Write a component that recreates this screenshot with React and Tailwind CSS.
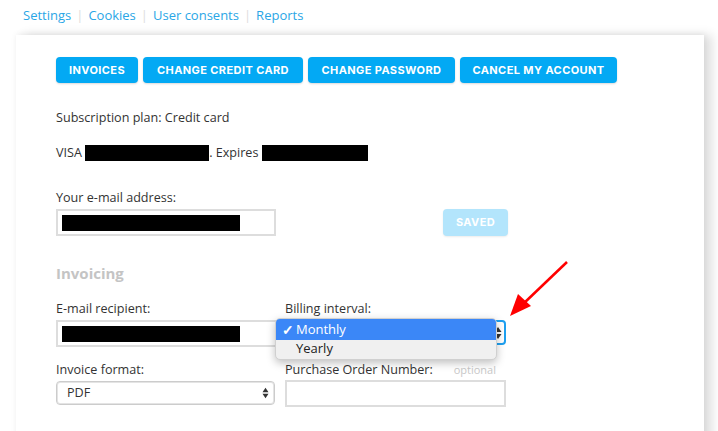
import React from "react";

const Redact = ({ w, h = 16 }) => (
  <span className="inline-block bg-black align-middle" style={{ width: w, height: h }} />
);

export default function App() {
  const font = { fontFamily: '"Open Sans", "Noto Sans", sans-serif' };
  const btnFont = { fontFamily: 'Inter, "DejaVu Sans", sans-serif' };
  const buttons = [
    ["INVOICES", "w-[82px]"],
    ["CHANGE CREDIT CARD", "w-[160px]"],
    ["CHANGE PASSWORD", "w-[147px]"],
    ["CANCEL MY ACCOUNT", "w-[157px]"],
  ];
  return (
    <div className="relative w-[718px] h-[431px] overflow-hidden bg-white text-[#333]" style={font}>
      <nav className="flex items-center h-[33px] pl-[23px] pb-[1px] text-[13px] text-[#2aa6e6]">
        <span>Settings</span>
        <span className="mx-[5px] text-[#ddd]">|</span>
        <span>Cookies</span>
        <span className="mx-[5px] text-[#ddd]">|</span>
        <span>User consents</span>
        <span className="mx-[5px] text-[#ddd]">|</span>
        <span>Reports</span>
      </nav>
      <div className="ml-[16px] mt-[2px] w-[688px] h-[420px] bg-white shadow-[8px_0_10px_rgba(0,0,0,0.13),0_-1px_6px_rgba(0,0,0,0.06)] pl-[40px] pt-[22px]">
        <div className="flex gap-[5px]" style={btnFont}>
          {buttons.map(([t, w]) => (
            <div
              key={t}
              className={`${w} h-[26px] rounded-[4px] bg-[#03a9f4] text-white text-[11px] font-bold tracking-[0.4px] flex items-center justify-center shadow-[0_1px_2px_rgba(0,0,0,0.15)]`}
            >
              {t}
            </div>
          ))}
        </div>
        <div className="mt-[26px] text-[12.6px] leading-[18px]">Subscription plan: Credit card</div>
        <div className="mt-[17px] text-[12.6px] leading-[18px] flex items-center">
          <span>VISA&nbsp;</span>
          <Redact w={124} />
          <span>. Expires&nbsp;</span>
          <Redact w={106} />
        </div>
        <div className="mt-[27px] text-[12.6px] leading-[18px]">Your e-mail address:</div>
        <div className="mt-[2px] w-[450px] flex justify-between items-start">
          <div className="w-[220px] h-[27px] border-2 border-[#ddd] flex items-center pl-[4px]">
            <Redact w={178} />
          </div>
          <div
            className="w-[65px] h-[27px] rounded-[4px] bg-[#b3e5fc] text-white text-[11px] font-bold tracking-[0.4px] flex items-center justify-center mr-[-2px] shadow-[0_1px_2px_rgba(0,0,0,0.08)]"
            style={btnFont}
          >
            SAVED
          </div>
        </div>
        <div className="mt-[27px] text-[15px] leading-[20px] font-bold text-[#c4c4c4]">Invoicing</div>
        <div className="mt-[17px] grid grid-cols-[229px_221px] text-[12.6px]">
          <div className="leading-[18px]">E-mail recipient:</div>
          <div className="leading-[18px]">Billing interval:</div>
          <div className="mt-[2px] w-[224px] h-[27px] border-2 border-[#ddd] flex items-center pl-[4px]">
            <Redact w={178} />
          </div>
          <div className="relative mt-[2px]">
            <div className="w-[221px] h-[25px] rounded-[4px] border-2 border-[#1ea0f0] bg-white flex items-center justify-end pr-[2px]">
              <svg width="8" height="14" viewBox="0 0 8 14">
                <path d="M4 1 L7.5 6 L0.5 6 Z" fill="#333" />
                <path d="M4 13 L7.5 8 L0.5 8 Z" fill="#333" />
              </svg>
            </div>
            <div className="absolute left-[-10px] top-[-2px] w-[222px] h-[42px] rounded-[5px] bg-[#f0f0f0] border border-[#d0d0d0] shadow-[0_3px_8px_rgba(0,0,0,0.25)] overflow-hidden text-[13px]">
              <div className="h-[21px] bg-[#3b87f7] text-white flex items-center pl-[6px]">
                <span className="w-[14px] text-[14px] font-bold leading-none">✓</span>
                <span>Monthly</span>
              </div>
              <div className="h-[18px] flex items-center pl-[20px] text-[#222]">Yearly</div>
            </div>
          </div>
          <div className="mt-[14px] leading-[18px]">Invoice format:</div>
          <div className="mt-[14px] leading-[18px] flex justify-between w-[211px]">
            <span>Purchase Order Number:</span>
            <span className="text-[11px] text-[#c8c8c8]">optional</span>
          </div>
          <div className="mt-[2px] w-[219px] h-[24px] rounded-[4px] border border-[#ccc] flex items-center justify-between pl-[10px] pr-[5px] shadow-[inset_0_0_0_1px_#e4e4e4]">
            <span>PDF</span>
            <svg width="7" height="12" viewBox="0 0 8 14">
              <path d="M4 1 L7.5 6 L0.5 6 Z" fill="#333" />
              <path d="M4 13 L7.5 8 L0.5 8 Z" fill="#333" />
            </svg>
          </div>
          <div className="mt-[1px] w-[221px] h-[27px] border-2 border-[#ddd]" />
        </div>
      </div>
      <svg className="absolute left-0 top-0 pointer-events-none" width="718" height="431">
        <line x1="567" y1="262" x2="522" y2="305" stroke="#f00" strokeWidth="2.5" />
        <path d="M510 316 L518 294 L531 306 Z" fill="#f00" />
      </svg>
    </div>
  );
}
